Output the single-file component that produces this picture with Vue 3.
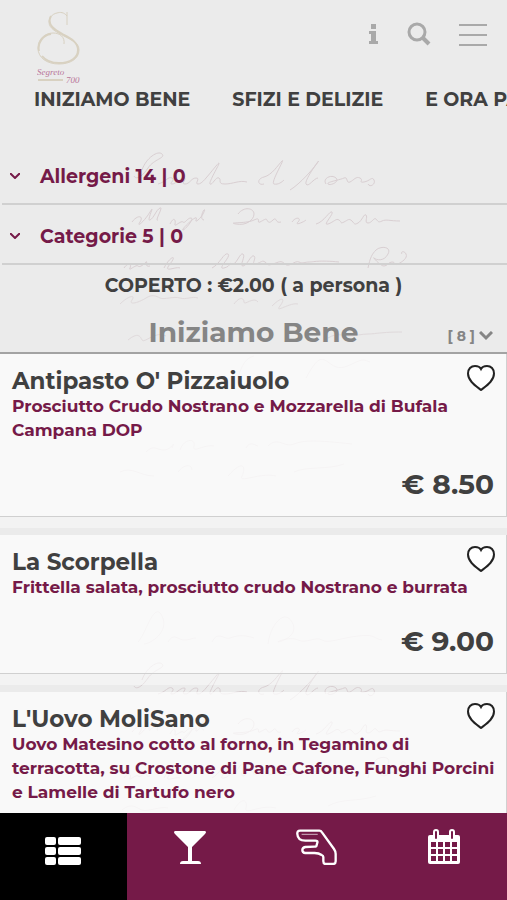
<script setup>
  import { ref } from 'vue'

  const tabs = ['INIZIAMO BENE', 'SFIZI E DELIZIE', 'E ORA PASTA']

  const filters = ['Allergeni 14 | 0', 'Categorie 5 | 0']

  const dishes = [
    {
      name: "Antipasto O' Pizzaiuolo",
      description: 'Prosciutto Crudo Nostrano e Mozzarella di Bufala Campana DOP',
      price: '€ 8.50'
    },
    {
      name: 'La Scorpella',
      description: 'Frittella salata, prosciutto crudo Nostrano e burrata',
      price: '€ 9.00'
    },
    {
      name: "L'Uovo MoliSano",
      description: 'Uovo Matesino cotto al forno, in Tegamino di terracotta, su Crostone di Pane Cafone, Funghi Porcini e Lamelle di Tartufo nero'
    }
  ]

  const liked = ref([])

  const toggleLike = (name) => {
    liked.value = liked.value.includes(name)
      ? liked.value.filter(n => n !== name)
      : [...liked.value, name]
  }
</script>

<template>
  <div class="app">
    <!-- faded handwriting behind the menu -->
    <svg class="script" viewBox="0 0 300 840" aria-hidden="true">
      <defs>
        <g id="lines">
          <path d="M24 20c4-12 16-20 20-16s-8 5-14 14-12 12-14 8M40 34c8-2 10-8 14-6s-4 6 0 6 8-6 12-6-4 6 1 6 6-6 11-6-2 6 2 6 8-6 18-18-8 16-6 18 6-8 9-6-2 6 6 6 14-4 22-2M146 34c-6 2-8-5 0-7s14-12 18-16-12 22-8 23 8-2 10-4M172 40c10-6 24-22 28-28s-14 18-12 22 8-6 12-6M208 34c-4-6 6-10 10-6s-6 8-8 6 12-4 16-6 2 6 6 4 6-6 10-4-2 5 4 4 8-6 10-2-4 8-6 4" />
          <path d="M14 72c6-8 12-6 8 0s4 0 10-10-4 10 0 8 6-10 10-12-6 14-2 12M52 74c4-8 6-4 5 0s6-4 8-2 4-4 8-4-6 12-8 12 8-10 12-12-2 6 3 2 8-12 6-10-4 10 0 10M120 64c6-8 16-6 16 0s-8 12-18 10 10 0 18-4 2 4 6 2 6-4 7-2 2 4 6 0 2 4 8 2M174 72c4-6 10-4 6 0s6 0 8-2M198 74c8-2 14-14 16-12s-10 14-4 12 8-6 11-4 1 4 5 2 5-4 8-1 2 4 6 2 6-10 8-8-2 8 2 8 6-6 8-4 2 4 6 2 8 0 18 0" />
          <path d="M6 118c4-6 8-4 6 0s6-4 8-2 6-2 8-4-2 6 4 4M46 118c6-12 14-14 6-4s6 2 10 4M94 118c8-4 12-16 16-14s-12 16-4 14 4-6 8-4 8-12 11-10-4 12 0 12 8-12 11-10-4 10 2 8 6-4 9-2 2 4 8 2 8-4 12 0 10-4 14-2 6 0 10 0 10-2 30 0M250 118c2-10 4-14 8-18s16-4 12 4-12 6-14 4 6 8 10 8 4-4 8-4 2 4 6 2 10-6 8-10-6-2-4 0" />
        </g>
      </defs>
      <use href="#lines" />
      <g class="faint">
        <path d="M2 154c8-8 16-10 12-4s8 2 14-2 10-2 14 0 14-2 20 0 12-2 18 0M116 154c6-8 10-6 10-2s10-6 14 0M154 156c10-10 14-8 8 0s10-4 18-2M10 190c10-8 12-4 14 0s14-10 24-4M210 188c10-6 14-2 20-2s14-2 20-2 14-2 34-2" />
        <path d="M120 228c4-14 8-20 16-22M188 228c10-18 14-22 22-16s12 8 24 2 12-4 18-2M28 302c8-8 10-2 18-2s12-12 8-2M62 300c4-12 16-12 14-4s10-2 20 0M128 298c4-8 10-2 12-2M150 296c10-10 16 2 26-2s22-4 58 0M2 322c12-6 20 4 34 4M60 322c6-8 14-8 14-2M110 326c16-18 18-8 14 0s18-4 34 0M176 322c12-6 34-2 50-8" />
        <path d="M20 492c8-8 16-42 24-26s-12 28-18 28M50 492c6-10 10-2 16-2s8-2 12-2M94 492c6-12 12-2 18-4s12-4 24 0M150 494c2-18 16-36 24-22s-12 20-14 20 12-6 20-2 18-4 24 0 18-2 36-4 14 2 24 4" />
      </g>
      <use href="#lines" y="510" />
      <g class="faint">
        <path d="M4 660c10-8 14-2 20 0s18-4 26-2M116 660c8-14 14-10 12-2s14-4 30 0M210 656c14-8 30-4 48-10" />
      </g>
    </svg>

    <header>
      <svg class="logo" viewBox="0 0 44 74" role="img" aria-label="Segreto 700">
        <g fill="none" stroke="#d8d1c1">
          <path d="M30 1v13M30 5C27 1 23 1 20 2c-5 1-8 5-8 9 0 7 8 10 15 14 8 4 15 7 15 14 0 9-9 14-20 14C10 53 1 47 1 37 1 28 8 22 16 22c7 0 12 4 11 11" stroke-width="1" />
          <path d="M14 5c-5 9 4 14 13 19 8 4 14 8 14 15 0 8-8 13-19 13-7 0-13-2-17-7M2 40c-2-8 4-16 12-17" stroke-width="2" />
          <path d="M1 69h25" stroke-width="2" />
        </g>
        <text x="0" y="64" class="logo-name">Segreto</text>
        <text x="29" y="72" class="logo-name">700</text>
      </svg>
      <div class="tools">
        <button aria-label="Info">
          <svg width="10" height="20" viewBox="0 0 10 20">
            <path d="M2 0h5v5H2zM0 7h7v10h2v3H0v-3h2v-7H0z" fill="#a9a9a9" />
          </svg>
        </button>
        <button aria-label="Cerca">
          <svg width="24" height="24" viewBox="0 0 24 24" fill="none" stroke="#a9a9a9">
            <circle cx="10" cy="10" r="8" stroke-width="3" />
            <path d="M16 16l6 6" stroke-width="4" />
          </svg>
        </button>
        <button aria-label="Menu">
          <svg width="28" height="24" viewBox="0 0 28 24">
            <path d="M0 3h28M0 13h28M0 23h28" stroke="#a9a9a9" stroke-width="2" />
          </svg>
        </button>
      </div>
    </header>

    <nav class="tabs">
      <a v-for="tab in tabs" :key="tab" href="#">{{ tab }}</a>
    </nav>

    <main>
      <div class="filters">
        <button v-for="filter in filters" :key="filter" class="filter">
          <svg width="10" height="6" viewBox="0 0 10 6">
            <path d="M0 0l5 5 5-5" fill="none" stroke="#751a48" stroke-width="2" />
          </svg>
          {{ filter }}
        </button>
      </div>
      <p class="cover">COPERTO : €2.00 ( a persona )</p>

      <div class="category">
        <h2>Iniziamo Bene</h2>
        <button class="count">
          [ 8 ]
          <svg width="14" height="10" viewBox="0 0 14 10">
            <path d="M1 1l6 6 6-6" fill="none" stroke="#858585" stroke-width="3" />
          </svg>
        </button>
      </div>

      <div class="slot" v-for="dish in dishes" :key="dish.name">
        <article class="dish">
          <button
            class="like"
            :class="{ liked: liked.includes(dish.name) }"
            :aria-label="'Preferito ' + dish.name"
            @click="toggleLike(dish.name)"
          >
            <svg width="28" height="26" viewBox="0 0 28 26">
              <path d="M14 25C9 21 1 16 1 8.500 1 4 4 1 8 1c3 0 5 1 6 3 1-2 3-3 6-3 4 0 7 3 7 7.500C27 16 19 21 14 25z" />
            </svg>
          </button>
          <h3>{{ dish.name }}</h3>
          <p class="description">{{ dish.description }}</p>
          <p class="price" v-if="dish.price">{{ dish.price }}</p>
        </article>
      </div>
    </main>

    <nav class="bottom">
      <a href="#" class="active" aria-label="Lista">
        <svg width="36" height="36" viewBox="0 0 36 36" fill="#fff">
          <rect x="0" y="8" width="11" height="8" rx="2" />
          <rect x="13" y="8" width="23" height="8" rx="2" />
          <rect x="0" y="18" width="11" height="8" rx="2" />
          <rect x="13" y="18" width="23" height="8" rx="2" />
          <rect x="0" y="28" width="11" height="8" rx="2" />
          <rect x="13" y="28" width="23" height="8" rx="2" />
        </svg>
      </a>
      <a href="#" aria-label="Bevande">
        <svg width="32" height="36" viewBox="0 0 32 36" fill="#fff">
          <path d="M1 2h30q2 1 0 3L18 18v14h6q3 0 3 3H6q0-3 3-3h5V18L1 5Q-1 3 1 2z" />
        </svg>
      </a>
      <a href="#" aria-label="Ordina">
        <svg width="42" height="36" viewBox="0 0 126 108" fill="none" stroke="#fff" stroke-width="7" stroke-linejoin="round" stroke-linecap="round">
          <path d="M12 5h58q5 0 8 5l36 50q5 7 5 15v22q0 8-8 8H89q-7 0-7-8V84q0-4-5-6-10-7-25-6H28q-9 0-9-9 0-7 9-9l28-1q6 0 6-5l2-7q2-6-6-6H28Q5 35 4 15 3 5 12 5z" />
          <path d="M18 16h46" stroke-width="2" />
        </svg>
      </a>
      <a href="#" aria-label="Prenota">
        <svg width="34" height="36" viewBox="0 0 34 36">
          <rect x="1" y="6" width="32" height="29" rx="2" fill="#fff" />
          <path d="M4 13h5v5H4zm7 0h5v5h-5zm7 0h5v5h-5zm7 0h5v5h-5zM4 20h5v5H4zm7 0h5v5h-5zm7 0h5v5h-5zm7 0h5v5h-5zM4 27h5v5H4zm7 0h5v5h-5zm7 0h5v5h-5zm7 0h5v5h-5z" fill="#751a48" />
          <path d="M9 3v6M25 3v6" stroke="#fff" stroke-width="6" stroke-linecap="round" />
          <path d="M9 3v6M25 3v6" stroke="#751a48" stroke-width="2" stroke-linecap="round" />
        </svg>
      </a>
    </nav>
  </div>
</template>

<style>
  body {
    background: #ebebeb;
  }
</style>

<style scoped>
  .app {
    position: relative;
    display: flex;
    flex-direction: column;
    height: 100vh;
    overflow: hidden;
    background: #ebebeb;
    color: #404040;
    font-family: Montserrat, Inter, sans-serif;
    font-weight: 700;
  }
  h2, h3, p {
    margin: 0;
  }
  a {
    color: inherit;
    text-decoration: none;
  }
  button {
    border: 0;
    padding: 0;
    background: none;
    color: inherit;
    font: inherit;
    cursor: pointer;
  }
  svg {
    display: block;
    flex: none;
  }

  .script {
    position: absolute;
    top: 150px;
    left: 118px;
    width: 300px;
    fill: none;
    stroke: #d9cfd2;
    stroke-width: 1;
  }
    .faint {
      opacity: .6;
    }

  header {
    position: relative;
    display: flex;
    justify-content: space-between;
    align-items: flex-start;
    padding: 11px 20px 0 37px;
    height: 74px;
  }
    .logo {
      width: 44px;
      height: 74px;
    }
      .logo-name {
        fill: #b9769a;
        font: italic 9px "Liberation Serif", serif;
      }
    .tools {
      display: flex;
      align-items: center;
      gap: 28px;
      padding-top: 11px;
    }

  .tabs {
    position: relative;
    display: flex;
    gap: 42px;
    padding: 3px 0 0 34px;
    font-size: 19px;
    line-height: 24px;
    white-space: nowrap;
  }

  main {
    position: relative;
    flex: 1;
    min-height: 0;
    overflow: hidden;
    padding-top: 33px;
  }
    .filters {
      padding-left: 2px;
    }
    .filter {
      display: flex;
      align-items: center;
      gap: 20px;
      width: 100%;
      height: 60px;
      padding: 4px 8px 0;
      border-bottom: 2px solid #d0d0d0;
      color: #751a48;
      font-size: 19px;
      text-align: left;
    }
    .cover {
      padding-top: 9px;
      font-size: 19px;
      line-height: 24px;
      text-align: center;
    }

    .category {
      display: grid;
      grid-template-columns: 1fr auto 1fr;
      align-items: center;
      padding: 16px 14px 2px;
      border-bottom: 2px solid #a3a3a3;
      color: #858585;
    }
      h2 {
        grid-column: 2;
        font-size: 28px;
        line-height: 36px;
      }
      .count {
        display: flex;
        align-items: center;
        justify-self: end;
        gap: 4px;
        padding-top: 8px;
        font-size: 14px;
      }

    .slot {
      margin-bottom: 7px;
      padding-bottom: 11px;
      background: rgba(255, 255, 255, .4);
    }
      .dish {
        position: relative;
        padding: 14px 8px 14px 12px;
        border: solid #d0d0d0;
        border-width: 0 1px 1px 0;
        background: rgba(255, 255, 255, .5);
      }
        h3 {
          font-size: 23px;
          line-height: 26px;
        }
        .description {
          color: #751a48;
          font-size: 17px;
          line-height: 24px;
        }
        .price {
          padding: 24px 4px 0 0;
          font-size: 28px;
          line-height: 36px;
          text-align: right;
        }
        .like {
          position: absolute;
          top: 11px;
          right: 11px;
        }
          .like path {
            fill: #fff;
            stroke: #222;
            stroke-width: 2;
          }
          .like.liked path {
            fill: #751a48;
          }

  .bottom {
    position: relative;
    display: grid;
    grid-template-columns: repeat(4, 1fr);
    background: #751a48;
  }
    .bottom a {
      display: flex;
      justify-content: center;
      padding: 16px 0 35px;
    }
    .bottom .active {
      background: #000;
    }
</style>
